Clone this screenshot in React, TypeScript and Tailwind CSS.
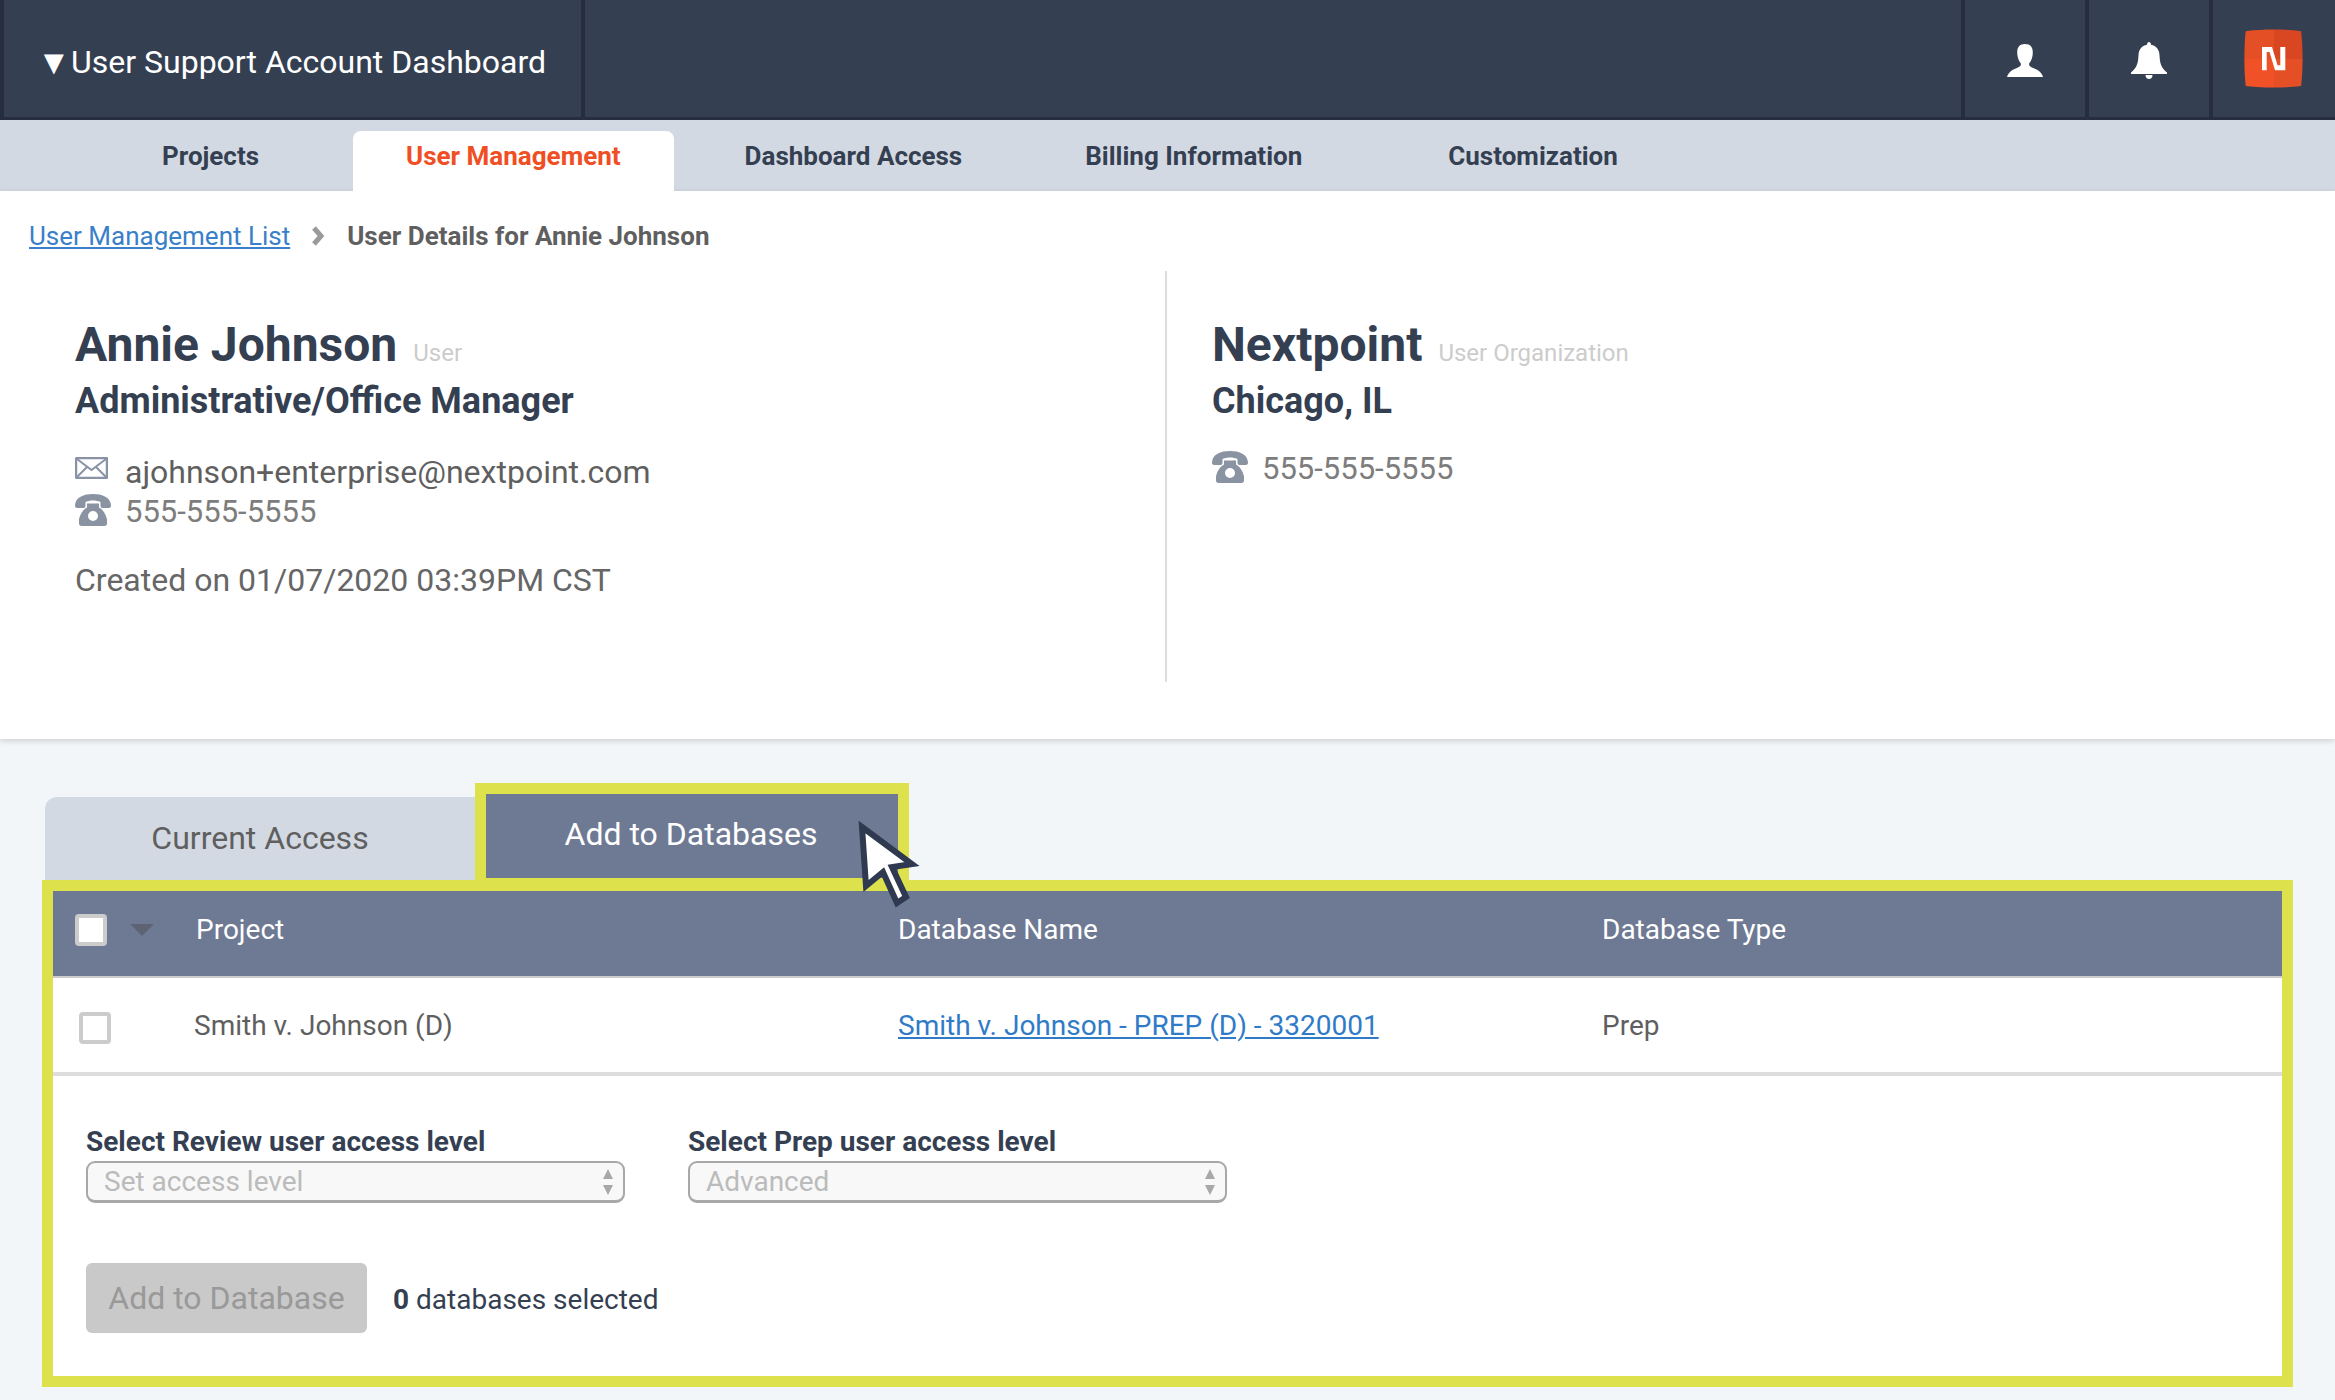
import React from "react";

function UserIcon() {
  return (
    <svg width="36" height="33" viewBox="0 0 36 33" fill="#fff">
      <path d="M18 0c-5.500 0-7.800 3-7.800 8.500 0 4.500 1.500 8.500 3.500 10.700.6 2-.2 3.300-2.700 4.300C6.500 25.300 1.500 27.500 0 33h36c-1.500-5.500-6.500-7.700-11-9.500-2.500-1-3.300-2.300-2.700-4.300 2-2.200 3.500-6.200 3.500-10.700C25.800 3 23.500 0 18 0z" />
    </svg>
  );
}

function BellIcon() {
  return (
    <svg width="36" height="37" viewBox="0 0 36 37" fill="#fff">
      <path d="M16 2.800C16 1 17 0 18 0s2 1 2 2.800c5.500 1 8.200 5 8.500 10.200.4 7 .8 12 7.500 17.600V32H0v-1.400C6.700 25 7.100 20 7.500 13c.3-5.200 3-9.200 8.500-10.200z" />
      <path d="M14.500 33h7c0 2.400-1.500 4-3.500 4s-3.500-1.600-3.500-4z" />
    </svg>
  );
}

function NextpointLogo() {
  return (
    <svg width="59" height="59" viewBox="0 0 59 59">
      <defs>
        <clipPath id="squircle">
          <path d="M3 2C20 0 39 0 56 2c1 0 1.200.5 1.300 1.500C59 20 59 39 57.300 55.500c-.1 1-.5 1.500-1.500 1.700C39 59 20 59 3.200 57.200c-1-.1-1.500-.5-1.700-1.500C0 39 0 20 1.500 3.500 1.600 2.500 2 2 3 2z" />
        </clipPath>
      </defs>
      <g clipPath="url(#squircle)">
        <rect width="30" height="30" fill="#e44f25" />
        <rect x="30" width="29" height="30" fill="#d84722" />
        <rect y="30" width="30" height="29" fill="#f15126" />
        <rect x="30" y="30" width="29" height="29" fill="#e44f25" />
      </g>
      <path d="M18 18H28L33.500 36.300H36.300V18H41.300V41.300H31L25.500 23H22.700V41.300H18Z" fill="#fff" />
    </svg>
  );
}

function MailIcon() {
  return (
    <svg width="33" height="22" viewBox="0 0 33 22" fill="none" stroke="#8a93a6" strokeWidth="2">
      <rect x="1" y="1" width="31" height="20" rx="1" strokeWidth="2.500" />
      <path d="M2 2l14.500 11L31 2M2 20l10-10M31 20L21 10" />
    </svg>
  );
}

function PhoneIcon() {
  return (
    <svg width="36" height="32" viewBox="0 0 36 32" fill="#8a93a1">
      <path d="M0 12C0 3 9 0 18 0s18 3 18 12c0 1-1 2-2.500 2h-6c-1.500 0-2-1-2-2.500V8C23 7 21 6.500 18 6.500S13 7 10.500 8v3.500c0 1.500-.5 2.500-2 2.500h-6C1 14 0 13 0 12z" />
      <path fillRule="evenodd" d="M12 9.500h12v4c4 2 7 7 8 12v4c0 1.500-1 2.500-2.500 2.500h-23C5 32 4 31 4 29.500v-4c1-5 4-10 8-12zM18 17a5 5 0 100 10 5 5 0 000-10z" />
    </svg>
  );
}

function Chevron() {
  return (
    <svg width="14" height="20" viewBox="0 0 14 20" fill="none" stroke="#9a9a9a" strokeWidth="5">
      <path d="M3 2l7 8-7 8" />
    </svg>
  );
}

function Cursor() {
  return (
    <svg
      className="absolute left-[814px] top-[38px]"
      width="66"
      height="90"
      viewBox="0 0 66 90"
      fill="#fff"
      stroke="#2f3a50"
      strokeWidth="6"
      strokeLinejoin="miter"
    >
      <path d="M6 6l50 37-20 3 14 30-9 6-14-31-17 14z" />
    </svg>
  );
}

function Field({ label, value }: { label: string; value: string }) {
  return (
    <div className="w-[539px]">
      <div className="h-[36px] text-[28px] leading-[36px] font-bold text-[#353f52]">{label}</div>
      <div className="mt-[1px] flex h-[42px] items-center justify-between rounded-[9px] border-2 border-b-[3px] border-[#a8a8a8] bg-[#f8f8f8] pl-[16px] pr-[9px]">
        <span className="text-[28px] text-[#bbbbbb]">{value}</span>
        <svg width="12" height="26" viewBox="0 0 12 26" fill="#a8a8a8">
          <path d="M6 0l5 10H1zM6 26L1 16h10z" />
        </svg>
      </div>
    </div>
  );
}

export default function App() {
  return (
    <div className="min-h-[1400px] w-full overflow-hidden bg-[#f2f6f9] font-['Roboto',sans-serif]">
      <header className="flex h-[120px] items-stretch border-b-[3px] border-[#272d40] bg-[#353f52] text-white">
        <div className="flex w-[585px] items-center border-x-[4px] border-[#272d40] pl-[33px] pt-[7px] text-[32px]">
          <span className="w-[34px] text-[34px] leading-none">▼</span>
          <span>User Support Account Dashboard</span>
        </div>
        <div className="flex-1" />
        <div className="flex w-[124px] items-center justify-center border-l-[4px] border-[#272d40] pt-[4px]">
          <UserIcon />
        </div>
        <div className="flex w-[124px] items-center justify-center border-l-[4px] border-[#272d40] pt-[4px]">
          <BellIcon />
        </div>
        <div className="flex w-[126px] items-center justify-center border-l-[4px] border-[#272d40] pr-[2px]">
          <NextpointLogo />
        </div>
      </header>

      <nav className="flex h-[71px] items-end bg-[#d3d9e2] pl-[162px] text-[26px] font-bold text-[#353f52]">
        <div className="flex h-[60px] items-center pb-[10px]">Projects</div>
        <div className="ml-[94px] flex h-[60px] items-center rounded-t-[8px] bg-white px-[53px] pb-[10px] text-[#f04e23]">
          User Management
        </div>
        <div className="ml-[71px] flex h-[60px] items-center pb-[10px]">Dashboard Access</div>
        <div className="ml-[123px] flex h-[60px] items-center pb-[10px]">Billing Information</div>
        <div className="ml-[146px] flex h-[60px] items-center pb-[10px]">Customization</div>
      </nav>

      <section className="bg-white pb-[57px] pt-[25px] shadow-[0_2px_6px_rgba(0,0,0,0.15)]">
        <div className="flex h-[40px] items-center pl-[29px] text-[26px]">
          <a className="text-[#3a7fc9] underline">User Management List</a>
          <span className="ml-[21px] mr-[22px] flex">
            <Chevron />
          </span>
          <span className="font-bold text-[#5f5f5f]">User Details for Annie Johnson</span>
        </div>

        <div className="mt-[15px] flex h-[411px]">
          <div className="w-[1165px] pl-[75px] pt-[46px]">
            <div className="flex h-[56px] items-baseline">
              <span className="text-[48px] font-bold leading-[56px] text-[#353f52]">Annie Johnson</span>
              <span className="ml-[16px] text-[24px] text-[#cccccc]">User</span>
            </div>
            <div className="mt-[8px] h-[40px] text-[36px] font-bold leading-[40px] text-[#353f52]">
              Administrative/Office Manager
            </div>
            <div className="mt-[31px] flex h-[40px] items-center">
              <span className="mb-[8px] flex">
                <MailIcon />
              </span>
              <span className="ml-[17px] text-[32px] text-[#5f5f5f]">ajohnson+enterprise@nextpoint.com</span>
            </div>
            <div className="flex h-[40px] items-center">
              <span className="mb-[4px] flex">
                <PhoneIcon />
              </span>
              <span className="ml-[14px] text-[31px] text-[#7d7d7d]">555-555-5555</span>
            </div>
            <div className="mt-[28px] h-[40px] text-[32px] leading-[40px] text-[#666666]">
              Created on 01/07/2020 03:39PM CST
            </div>
          </div>
          <div className="flex-1 border-l-[2px] border-[#dcdcdc] pl-[45px] pt-[46px]">
            <div className="flex h-[56px] items-baseline">
              <span className="text-[48px] font-bold leading-[56px] text-[#353f52]">Nextpoint</span>
              <span className="ml-[16px] text-[24px] text-[#cccccc]">User Organization</span>
            </div>
            <div className="mt-[8px] h-[40px] text-[36px] font-bold leading-[40px] text-[#353f52]">Chicago, IL</div>
            <div className="mt-[28px] flex h-[40px] items-center">
              <span className="mb-[4px] flex">
                <PhoneIcon />
              </span>
              <span className="ml-[14px] text-[31px] text-[#7d7d7d]">555-555-5555</span>
            </div>
          </div>
        </div>
      </section>

      <main className="pl-[42px] pt-[44px]">
        <div className="relative flex h-[97px] items-end">
          <div className="ml-[3px] flex h-[83px] w-[430px] items-center justify-center rounded-tl-[12px] bg-[#d3d9e2] pb-[2px] text-[32px] text-[#5f5f5f]">
            Current Access
          </div>
          <div className="flex h-[97px] w-[434px] items-center justify-center border-x-[11px] border-b-[2px] border-t-[11px] border-[#dde14c] bg-[#6e7a93] pb-[5px] pr-[2px] text-[32px] text-white">
            Add to Databases
          </div>
          <Cursor />
        </div>

        <div className="h-[507px] w-[2251px] border-[11px] border-[#dde14c] bg-white">
          <div className="flex h-[87px] items-center border-b-[2px] border-[#cccccc] bg-[#6e7a93] pb-[8px] text-[28px] text-white">
            <div className="flex w-[143px] items-center pl-[22px]">
              <span className="h-[32px] w-[32px] rounded-[4px] border-[4px] border-[#cccccc] bg-white" />
              <svg className="ml-[23px]" width="24" height="12" viewBox="0 0 24 12" fill="#5d6373">
                <path d="M0 0h24L12 12z" />
              </svg>
            </div>
            <div className="w-[702px]">Project</div>
            <div className="w-[704px]">Database Name</div>
            <div className="flex-1">Database Type</div>
          </div>
          <div className="flex h-[98px] items-center border-b-[4px] border-[#dddddd] pt-[2px] text-[28px] text-[#5f5f5f]">
            <div className="w-[141px] pl-[26px] pt-[4px]">
              <span className="block h-[32px] w-[32px] rounded-[4px] border-[4px] border-[#cccccc] bg-white" />
            </div>
            <div className="w-[704px]">Smith v. Johnson (D)</div>
            <a className="w-[704px] text-[#2f7bc8]">
              <span className="underline">Smith v. Johnson - PREP (D) - 3320001</span>
            </a>
            <div className="flex-1">Prep</div>
          </div>
          <div className="px-[33px] pt-[48px]">
            <div className="flex gap-[63px]">
              <Field label="Select Review user access level" value="Set access level" />
              <Field label="Select Prep user access level" value="Advanced" />
            </div>
            <div className="mt-[60px] flex items-center">
              <button className="h-[70px] w-[281px] rounded-[6px] bg-[#c9c9c9] text-[32px] text-[#999999]">
                Add to Database
              </button>
              <span className="ml-[26px] mt-[3px] text-[28px] text-[#353f52]">
                <b>0</b> databases selected
              </span>
            </div>
          </div>
        </div>
      </main>
    </div>
  );
}
